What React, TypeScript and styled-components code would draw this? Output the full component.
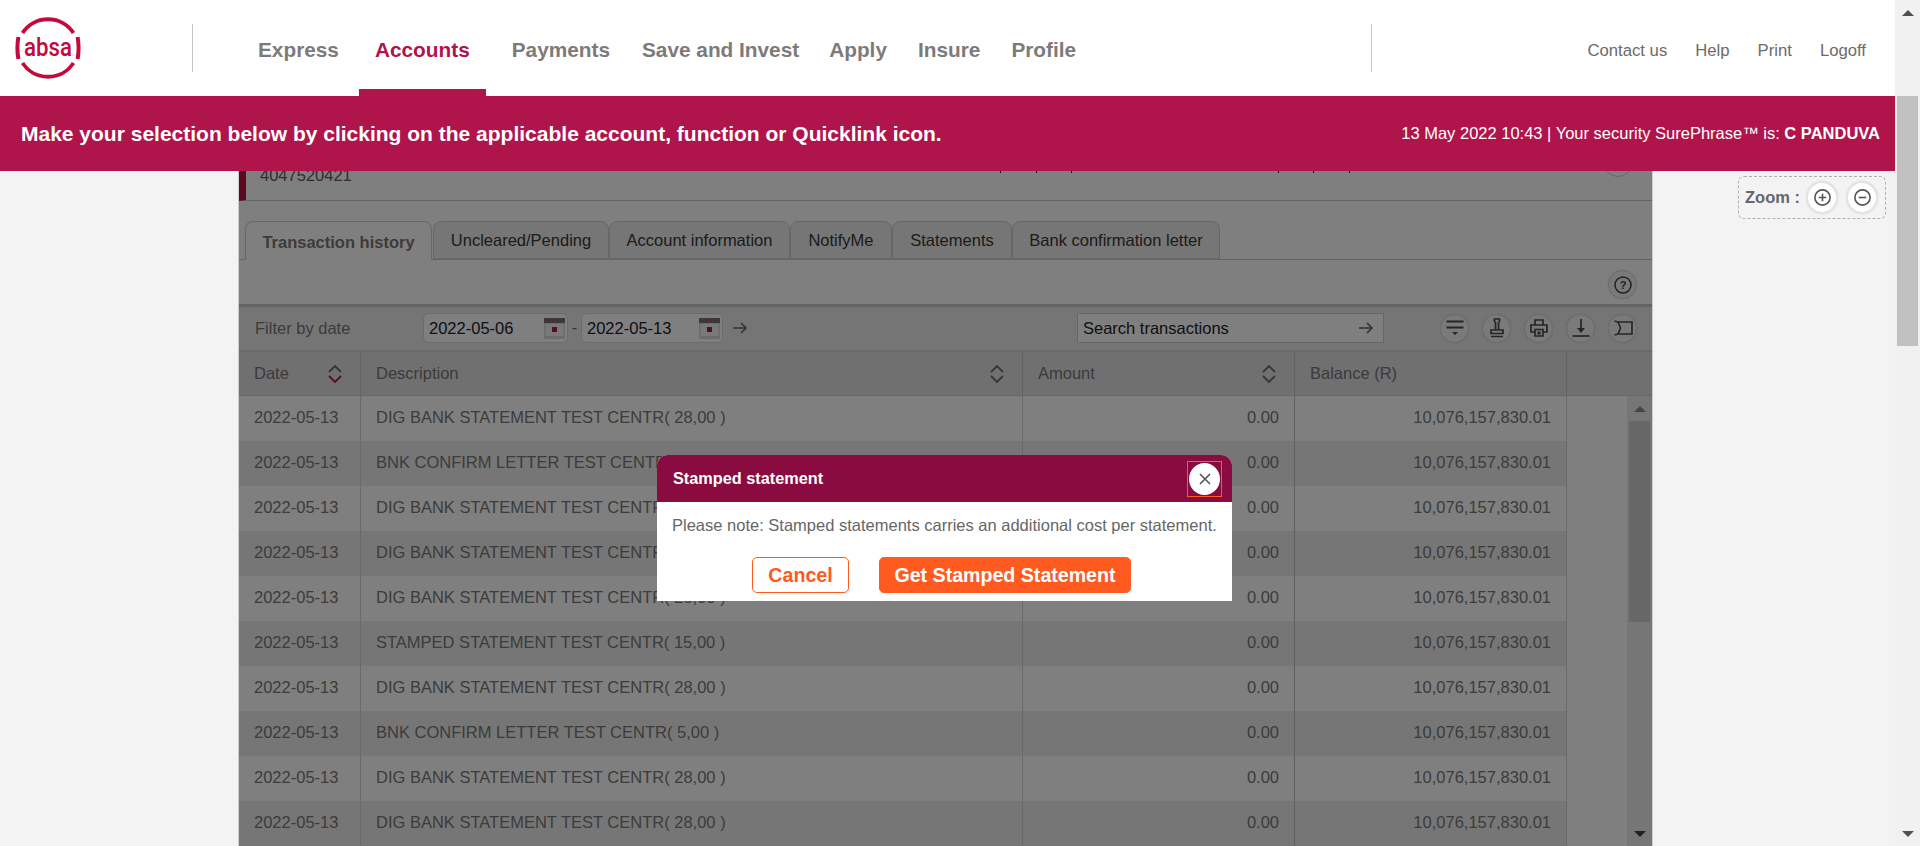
import React from 'react';
import styled, { createGlobalStyle } from 'styled-components';

const GlobalStyle = createGlobalStyle`
  html, body {
    margin: 0;
    height: 100%;
    overflow: hidden;
    background: #f3f3f3;
    font-family: "Liberation Sans", Arial, sans-serif;
  }
`;

const Page = styled.div`
  display: flex;
  height: 846px;
  overflow: hidden;
`;

const Content = styled.div`
  flex: 1;
  min-width: 0;
  display: flex;
  flex-direction: column;
`;

const PageScroll = styled.div`
  width: 25px;
  background: #f1f1f1;
  display: flex;
  flex-direction: column;
  align-items: center;
  position: relative;
`;

const ScrollThumb = styled.div`
  position: absolute;
  top: 96px;
  left: 2px;
  right: 2px;
  height: 250px;
  background: #c1c1c1;
`;

const ArrowUp = styled.div<{ $color?: string }>`
  width: 0;
  height: 0;
  border-left: 6px solid transparent;
  border-right: 6px solid transparent;
  border-bottom: 6px solid ${(p) => p.$color || '#505050'};
`;

const ArrowDown = styled.div<{ $color?: string }>`
  width: 0;
  height: 0;
  border-left: 6px solid transparent;
  border-right: 6px solid transparent;
  border-top: 6px solid ${(p) => p.$color || '#505050'};
`;

const PageArrows = styled.div`
  flex: 1;
  display: flex;
  flex-direction: column;
  justify-content: space-between;
  align-items: center;
  padding: 10px 0 9px;
`;

const Header = styled.header`
  height: 96px;
  flex: none;
  background: #fff;
  display: flex;
  align-items: center;
`;

const LogoWrap = styled.div`
  width: 192px;
  padding-left: 14px;
  box-sizing: border-box;
  flex: none;
  display: flex;
`;

const VLine = styled.div`
  width: 1px;
  height: 48px;
  background: #c4c4c4;
  flex: none;
`;

const Nav = styled.nav`
  width: 1178px;
  height: 96px;
  flex: none;
  display: flex;
  padding-left: 49px;
  box-sizing: border-box;
`;

const NavItem = styled.a<{ $active?: boolean; $gap: number }>`
  height: 96px;
  box-sizing: border-box;
  padding: 0 16px;
  margin-right: ${(p) => p.$gap}px;
  font-size: 20.8px;
  font-weight: bold;
  line-height: 100px;
  white-space: nowrap;
  color: ${(p) => (p.$active ? '#af144b' : '#7d7a7a')};
  border-bottom: ${(p) => (p.$active ? '7px solid #af144b' : 'none')};
`;

const UtilityNav = styled.div`
  flex: 1;
  display: flex;
  justify-content: flex-end;
  gap: 28px;
  padding-right: 29px;
  padding-top: 5px;
`;

const UtilityLink = styled.a`
  font-size: 16.7px;
  color: #6c6a6a;
  white-space: nowrap;
`;

const Banner = styled.div`
  height: 75px;
  flex: none;
  background: #af144b;
  color: #fff;
  display: flex;
  align-items: center;
  justify-content: space-between;
  padding: 0 15px 0 21px;
  position: relative;
  z-index: 3;
`;

const BannerTitle = styled.div`
  font-size: 21px;
  font-weight: bold;
`;

const BannerInfo = styled.div`
  font-size: 16.5px;
  b {
    font-weight: bold;
  }
`;

const Main = styled.main`
  flex: 1;
  min-height: 0;
  display: flex;
  align-items: flex-start;
  padding-left: 238px;
`;

const Panel = styled.section`
  width: 1415px;
  height: 675px;
  flex: none;
  background: #fff;
  position: relative;
  overflow: hidden;
  display: flex;
  flex-direction: column;
  border-left: 1px solid #ccc;
  border-right: 1px solid #ccc;
  box-sizing: border-box;
`;

const Dim = styled.div`
  position: absolute;
  inset: 0;
  background: rgba(0, 0, 0, 0.5);
  z-index: 1;
`;

const AccountRow = styled.div`
  height: 30px;
  flex: none;
  box-sizing: border-box;
  border-left: 8px solid #b5173f;
  border-bottom: 1px solid #c8c8c8;
  margin-left: -1px;
  padding-left: 14px;
  overflow: hidden;
  display: flex;
`;

const AccountNumber = styled.div`
  width: 740px;
  flex: none;
  font-size: 16.5px;
  line-height: 9px;
  color: #5c5c5c;
`;

const Tick = styled.span<{ $offset: number }>`
  width: 1px;
  height: 2px;
  flex: none;
  margin-left: ${(p) => p.$offset}px;
  background: #222;
`;

const AccountHelp = styled.div`
  width: 30px;
  height: 30px;
  margin: -24px 19px 0 auto;
  flex: none;
  border-radius: 50%;
  border: 1px solid #d0d0d0;
  box-sizing: border-box;
`;

const TabBar = styled.div`
  height: 59px;
  flex: none;
  box-sizing: border-box;
  padding: 21px 0 0 6px;
  background: #fff;
  border-bottom: 1px solid #c8c8c8;
  display: flex;
  align-items: flex-end;
`;

const Tab = styled.div<{ $active?: boolean; $width: number }>`
  width: ${(p) => p.$width}px;
  height: ${(p) => (p.$active ? 39 : 38)}px;
  margin-bottom: ${(p) => (p.$active ? -1 : 0)}px;
  margin-right: ${(p) => (p.$active ? 1 : 0)}px;
  box-sizing: border-box;
  flex: none;
  display: flex;
  align-items: center;
  justify-content: center;
  border: 1px solid #cfcfcf;
  border-bottom: ${(p) => (p.$active ? 'none' : '1px solid #cfcfcf')};
  border-radius: 8px 8px 0 0;
  background: ${(p) => (p.$active ? '#fff' : '#ececec')};
  color: ${(p) => (p.$active ? '#7c7676' : '#3a3636')};
  font-size: 16.5px;
  font-weight: ${(p) => (p.$active ? 'bold' : 'normal')};
  padding-top: ${(p) => (p.$active ? 3 : 0)}px;
`;

const HelpRow = styled.div`
  height: 47px;
  flex: none;
  box-sizing: border-box;
  background: #fff;
  border-bottom: 3px solid #c8c8c8;
  display: flex;
  align-items: center;
  justify-content: flex-end;
  padding: 5px 15px 0 0;
`;

const RoundButton = styled.button`
  width: 29px;
  height: 29px;
  padding: 0;
  flex: none;
  border: 1px solid #d9d9d9;
  border-radius: 50%;
  background: #f4f4f4;
  box-shadow: 0 0 2px rgba(0, 0, 0, 0.12);
  display: flex;
  align-items: center;
  justify-content: center;
`;

const FilterRow = styled.div`
  height: 45px;
  flex: none;
  box-sizing: border-box;
  background: #ebebeb;
  border-bottom: 2px solid #d4d4d4;
  display: flex;
  align-items: center;
  padding: 0 15px 1px 16px;
`;

const FilterLabel = styled.div`
  width: 168px;
  flex: none;
  font-size: 16.5px;
  color: #767676;
`;

const DateField = styled.div<{ $width: number }>`
  width: ${(p) => p.$width}px;
  height: 30px;
  box-sizing: border-box;
  flex: none;
  border: 1px solid #d8d8d8;
  border-radius: 6px;
  background: #fff;
  padding: 0 2px 0 5px;
  display: flex;
  align-items: center;
  justify-content: space-between;
  font-size: 16.5px;
  color: #222;
`;

const DateDash = styled.span`
  width: 13px;
  text-align: center;
  flex: none;
  font-size: 16px;
  color: #666;
`;

const GoArrow = styled.span`
  margin-left: 9px;
  display: flex;
  flex: none;
  color: #444;
`;

const SearchField = styled.div`
  width: 307px;
  height: 30px;
  margin-left: 329px;
  box-sizing: border-box;
  flex: none;
  border: 1px solid #ccc;
  background: #fff;
  padding: 0 9px 0 5px;
  display: flex;
  align-items: center;
  justify-content: space-between;
  font-size: 16.5px;
  color: #222;
`;

const ToolButtons = styled.div`
  margin-left: auto;
  display: flex;
  gap: 13px;
`;

const TableWrap = styled.div`
  flex: 1;
  min-height: 0;
  display: flex;
  flex-direction: column;
`;

const TableRow = styled.div`
  display: grid;
  grid-template-columns: 122px 662px 272px 272px 1fr;
  height: 44px;
  flex: none;
`;

const HeadCell = styled.div`
  background: #e0e0e0;
  border-right: 1px solid #c8c8c8;
  border-bottom: 1px solid #cfcfcf;
  box-sizing: border-box;
  display: flex;
  align-items: center;
  justify-content: space-between;
  padding: 0 17px 0 15px;
  font-size: 16.5px;
  color: #767676;
`;

const LastHead = styled.div`
  background: #e0e0e0;
  border-bottom: 1px solid #cfcfcf;
`;

const BodyArea = styled.div`
  flex: 1;
  min-height: 0;
  display: flex;
  overflow: hidden;
`;

const Rows = styled.div`
  flex: 1;
  min-width: 0;
`;

const BodyRow = styled.div`
  display: grid;
  grid-template-columns: 122px 662px 272px 272px;
  height: 45px;
  width: 1328px;
`;

const Cell = styled.div<{ $alt: boolean; $right?: boolean; $wide?: boolean }>`
  box-sizing: border-box;
  background: ${(p) => (p.$alt ? '#ededed' : '#fff')};
  border-right: 1px solid ${(p) => (p.$wide ? '#c0c0c0' : '#d4d4d4')};
  display: flex;
  align-items: center;
  justify-content: ${(p) => (p.$right ? 'flex-end' : 'flex-start')};
  padding: 0 ${(p) => (p.$right ? 15 : 12)}px 2px 15px;
  font-size: 16.5px;
  color: #787878;
  white-space: nowrap;
`;

const InnerScroll = styled.div`
  width: 25px;
  flex: none;
  background: #ededed;
  position: relative;
  display: flex;
  flex-direction: column;
  align-items: center;
  justify-content: space-between;
  padding: 10px 0 9px;
  box-sizing: border-box;
`;

const InnerThumb = styled.div`
  position: absolute;
  top: 25px;
  left: 2px;
  right: 2px;
  height: 201px;
  background: #cfcfcf;
`;

const Zoom = styled.div`
  margin: 5px 0 0 85px;
  width: 148px;
  height: 43px;
  box-sizing: border-box;
  flex: none;
  border: 1px dashed #b0b0b0;
  border-radius: 6px;
  display: flex;
  align-items: center;
  padding-left: 6px;
  font-size: 16.5px;
  font-weight: bold;
  color: #666;
  white-space: nowrap;
`;

const ZoomLabel = styled.span`
  margin-right: 7px;
`;

const ZoomButton = styled(RoundButton)`
  background: #fff;
  border-color: #e4e4e4;
  width: 30px;
  height: 31px;
  margin-right: 10px;
  box-shadow: 0 0 3px rgba(0, 0, 0, 0.2);
`;

const Modal = styled.div`
  position: absolute;
  left: 418px;
  top: 284px;
  width: 575px;
  height: 146px;
  background: #fff;
  border-radius: 11px 11px 0 0;
  z-index: 2;
  display: flex;
  flex-direction: column;
`;

const ModalHeader = styled.div`
  height: 47px;
  flex: none;
  background: #8a0b3f;
  border-radius: 11px 11px 0 0;
  color: #fff;
  display: flex;
  align-items: center;
  justify-content: space-between;
  padding: 0 10px 0 16px;
`;

const ModalTitle = styled.div`
  font-size: 16.3px;
  font-weight: bold;
`;

const CloseOutline = styled.div`
  width: 35px;
  height: 36px;
  box-sizing: border-box;
  border: 1px solid #ff5a1f;
  display: flex;
  align-items: center;
  justify-content: center;
`;

const CloseCircle = styled.div`
  width: 31px;
  height: 32px;
  border-radius: 50%;
  background: #fff;
  display: flex;
  align-items: center;
  justify-content: center;
`;

const ModalBody = styled.p`
  margin: 13px 0 0 15px;
  font-size: 16.5px;
  line-height: 20px;
  color: #666;
  white-space: nowrap;
`;

const ModalActions = styled.div`
  margin-top: 22px;
  display: flex;
  padding-left: 95px;
  gap: 30px;
`;

const ModalButton = styled.button<{ $primary?: boolean }>`
  height: 36px;
  width: ${(p) => (p.$primary ? 252 : 97)}px;
  padding: 0;
  box-sizing: border-box;
  border: 1px solid #ff5a1f;
  border-radius: 5px;
  background: ${(p) => (p.$primary ? '#ff5a1f' : '#fff')};
  color: ${(p) => (p.$primary ? '#fff' : '#ff5a1f')};
  font-family: "Liberation Sans", Arial, sans-serif;
  font-size: 19.6px;
  font-weight: bold;
`;

const AbsaLogo = () => (
  <svg width="68" height="68" viewBox="0 0 68 68" aria-label="absa">
    <g fill="none" stroke="#c5093b" strokeWidth="3.8">
      <path d="M8.5 19 A 30.5 30.5 0 0 1 59.5 19" />
      <path d="M8.5 49 A 30.5 30.5 0 0 0 59.5 49" />
      <path d="M4.4 23 Q 2.4 34 4.4 45" strokeWidth="4" />
      <path d="M63.6 23 Q 65.6 34 63.6 45" strokeWidth="4" />
    </g>
    <text
      x="34"
      y="42"
      textAnchor="middle"
      fill="#c5093b"
      fontFamily='Roboto, "Liberation Sans", sans-serif'
      fontWeight="500"
      fontSize="25"
      textLength="48"
      lengthAdjust="spacingAndGlyphs"
    >
      absa
    </text>
  </svg>
);

const ArrowRight = ({ size = 16 }: { size?: number }) => (
  <svg width={size} height={size} viewBox="0 0 16 16" fill="none" stroke="#666" strokeWidth="1.6">
    <path d="M1 8h13M9 3l5 5-5 5" />
  </svg>
);

const Calendar = () => (
  <svg width="21" height="21" viewBox="0 0 21 21">
    <rect x="0" y="0" width="21" height="21" rx="1" fill="#d9d9d9" />
    <rect x="0" y="0" width="21" height="5" fill="#7f6a74" />
    <rect x="1.5" y="6" width="18" height="12" fill="#f2f2f2" />
    <rect x="8" y="9" width="5" height="5" fill="#b5173f" />
  </svg>
);

const SortIcon = ({ downColor = '#6c6c6c' }: { downColor?: string }) => (
  <svg width="16" height="20" viewBox="0 0 16 20" fill="none" strokeWidth="1.8">
    <path d="M2 8l6-6 6 6" stroke="#6c6c6c" />
    <path d="M2 12l6 6 6-6" stroke={downColor} />
  </svg>
);

const ToolIcon = ({ children }: { children: React.ReactNode }) => (
  <RoundButton>
    <svg width="20" height="22" viewBox="0 0 20 22" fill="none" stroke="#4a4a4a" strokeWidth="1.7">
      {children}
    </svg>
  </RoundButton>
);

const rows = [
  'DIG BANK STATEMENT TEST CENTR( 28,00 )',
  'BNK CONFIRM LETTER TEST CENTR( 5,00 )',
  'DIG BANK STATEMENT TEST CENTR( 28,00 )',
  'DIG BANK STATEMENT TEST CENTR( 28,00 )',
  'DIG BANK STATEMENT TEST CENTR( 28,00 )',
  'STAMPED STATEMENT TEST CENTR( 15,00 )',
  'DIG BANK STATEMENT TEST CENTR( 28,00 )',
  'BNK CONFIRM LETTER TEST CENTR( 5,00 )',
  'DIG BANK STATEMENT TEST CENTR( 28,00 )',
  'DIG BANK STATEMENT TEST CENTR( 28,00 )',
];

const tabs = [
  { label: 'Uncleared/Pending', width: 176 },
  { label: 'Account information', width: 181 },
  { label: 'NotifyMe', width: 102 },
  { label: 'Statements', width: 120 },
  { label: 'Bank confirmation letter', width: 208 },
];

const navItems = [
  { label: 'Express', gap: 4 },
  { label: 'Accounts', gap: 10, active: true },
  { label: 'Payments', gap: 0 },
  { label: 'Save and Invest', gap: -2 },
  { label: 'Apply', gap: -1 },
  { label: 'Insure', gap: -1 },
  { label: 'Profile', gap: 0 },
];

const tickOffsets = [0, 35, 34, 206, 34, 35];

const App: React.FC = () => {
  return (
    <Page>
      <GlobalStyle />
      <Content>
        <Header>
          <LogoWrap>
            <AbsaLogo />
          </LogoWrap>
          <VLine />
          <Nav>
            {navItems.map((item) => (
              <NavItem key={item.label} $active={item.active} $gap={item.gap}>
                {item.label}
              </NavItem>
            ))}
          </Nav>
          <VLine />
          <UtilityNav>
            <UtilityLink>Contact us</UtilityLink>
            <UtilityLink>Help</UtilityLink>
            <UtilityLink>Print</UtilityLink>
            <UtilityLink>Logoff</UtilityLink>
          </UtilityNav>
        </Header>
        <Banner>
          <BannerTitle>
            Make your selection below by clicking on the applicable account, function or Quicklink icon.
          </BannerTitle>
          <BannerInfo>
            13 May 2022 10:43 | Your security SurePhrase™ is: <b>C PANDUVA</b>
          </BannerInfo>
        </Banner>
        <Main>
          <Panel>
            <AccountRow>
              <AccountNumber>4047520421</AccountNumber>
              {tickOffsets.map((offset, i) => (
                <Tick key={i} $offset={offset} />
              ))}
              <AccountHelp />
            </AccountRow>
            <TabBar>
              <Tab $active $width={187}>
                Transaction history
              </Tab>
              {tabs.map((t) => (
                <Tab key={t.label} $width={t.width}>
                  {t.label}
                </Tab>
              ))}
            </TabBar>
            <HelpRow>
              <RoundButton>
                <svg width="20" height="20" viewBox="0 0 20 20" fill="none" stroke="#444" strokeWidth="1.5">
                  <circle cx="10" cy="10" r="8" />
                  <text x="10" y="14" textAnchor="middle" fontSize="11" fontWeight="bold" fill="#444" stroke="none" fontFamily="Liberation Sans">
                    ?
                  </text>
                </svg>
              </RoundButton>
            </HelpRow>
            <FilterRow>
              <FilterLabel>Filter by date</FilterLabel>
              <DateField $width={145}>
                2022-05-06
                <Calendar />
              </DateField>
              <DateDash>-</DateDash>
              <DateField $width={142}>
                2022-05-13
                <Calendar />
              </DateField>
              <GoArrow>
                <ArrowRight />
              </GoArrow>
              <SearchField>
                Search transactions
                <ArrowRight />
              </SearchField>
              <ToolButtons>
                <ToolIcon>
                  <path d="M1.5 4.5h17M1.5 10.5h17" strokeWidth="1.8" />
                  <path d="M7 15l3 3 3-3z" fill="#4a4a4a" stroke="none" />
                </ToolIcon>
                <ToolIcon>
                  <path d="M7.5 2h5v2.5l-1 1v7.5h-3V5.5l-1-1zM4 13h12v3.5H4zM4 19.5h12" />
                </ToolIcon>
                <ToolIcon>
                  <path d="M6 8V3h8v5M5.5 15H2V8h16v7h-3.5M6 12.5h8V19H6z" />
                  <rect x="8.5" y="14.5" width="3" height="3" fill="#4a4a4a" stroke="none" />
                </ToolIcon>
                <ToolIcon>
                  <path d="M10 2v12" />
                  <path d="M6 11l4 5 4-5z" fill="#4a4a4a" stroke="none" />
                  <path d="M1.5 19h17" />
                </ToolIcon>
                <ToolIcon>
                  <path d="M5 5h14v12H5M1.5 4l3.5 1M1.5 18l3.5-1M5 5l2.5 6L5 17" />
                </ToolIcon>
              </ToolButtons>
            </FilterRow>
            <TableWrap>
              <TableRow>
                <HeadCell>
                  Date
                  <SortIcon downColor="#b5173f" />
                </HeadCell>
                <HeadCell>
                  Description
                  <SortIcon />
                </HeadCell>
                <HeadCell>
                  Amount
                  <SortIcon />
                </HeadCell>
                <HeadCell>Balance (R)</HeadCell>
                <LastHead />
              </TableRow>
              <BodyArea>
                <Rows>
                  {rows.map((description, i) => (
                    <BodyRow key={i}>
                      <Cell $alt={i % 2 === 1}>2022-05-13</Cell>
                      <Cell $alt={i % 2 === 1}>{description}</Cell>
                      <Cell $alt={i % 2 === 1} $right $wide>
                        0.00
                      </Cell>
                      <Cell $alt={i % 2 === 1} $right>
                        10,076,157,830.01
                      </Cell>
                    </BodyRow>
                  ))}
                </Rows>
                <InnerScroll>
                  <ArrowUp $color="#8a8a8a" />
                  <InnerThumb />
                  <ArrowDown $color="#444" />
                </InnerScroll>
              </BodyArea>
            </TableWrap>
            <Dim />
            <Modal>
              <ModalHeader>
                <ModalTitle>Stamped statement</ModalTitle>
                <CloseOutline>
                  <CloseCircle>
                    <svg width="14" height="14" viewBox="0 0 14 14" fill="none" stroke="#555" strokeWidth="1.6">
                      <path d="M2 2l10 10M12 2L2 12" />
                    </svg>
                  </CloseCircle>
                </CloseOutline>
              </ModalHeader>
              <ModalBody>Please note: Stamped statements carries an additional cost per statement.</ModalBody>
              <ModalActions>
                <ModalButton>Cancel</ModalButton>
                <ModalButton $primary>Get Stamped Statement</ModalButton>
              </ModalActions>
            </Modal>
          </Panel>
          <Zoom>
            <ZoomLabel>Zoom :</ZoomLabel>
            <ZoomButton>
              <svg width="19" height="19" viewBox="0 0 20 20" fill="none" stroke="#555" strokeWidth="1.7">
                <circle cx="10" cy="10" r="8" />
                <path d="M6 10h8M10 6v8" />
              </svg>
            </ZoomButton>
            <ZoomButton>
              <svg width="19" height="19" viewBox="0 0 20 20" fill="none" stroke="#555" strokeWidth="1.7">
                <circle cx="10" cy="10" r="8" />
                <path d="M6 10h8" />
              </svg>
            </ZoomButton>
          </Zoom>
        </Main>
      </Content>
      <PageScroll>
        <ScrollThumb />
        <PageArrows>
          <ArrowUp />
          <ArrowDown />
        </PageArrows>
      </PageScroll>
    </Page>
  );
};

export default App;
